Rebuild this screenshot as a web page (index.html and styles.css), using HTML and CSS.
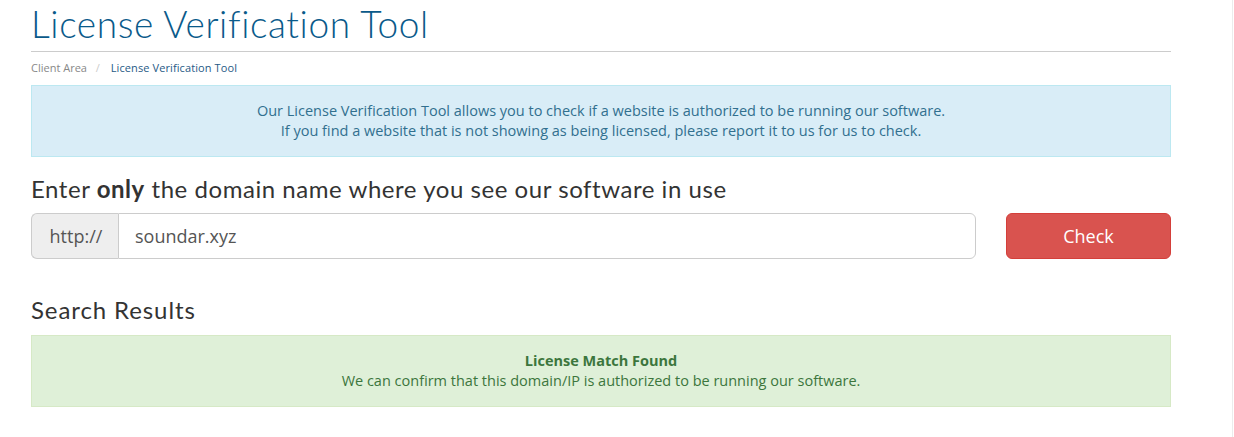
FILE: index.html
```html
<!DOCTYPE html>
<html>
<head>
<meta charset="utf-8">
<link rel="stylesheet" href="styles.css">
</head>
<body>
<div class="page">
  <div class="container">
    <h1 class="title">License Verification Tool</h1>
    <div class="breadcrumb">
      <span class="crumb">Client Area</span>
      <span class="sep">/</span>
      <span class="crumb active">License Verification Tool</span>
    </div>
    <div class="alert alert-info">
      Our License Verification Tool allows you to check if a website is authorized to be running our software.<br>
      If you find a website that is not showing as being licensed, please report it to us for us to check.
    </div>
    <h3 class="subhead">Enter <strong>only</strong> the domain name where you see our software in use</h3>
    <div class="form-row">
      <div class="input-group">
        <span class="addon">http://</span>
        <input class="field" type="text" value="soundar.xyz">
      </div>
      <button class="btn-check" type="button">Check</button>
    </div>
    <h3 class="subhead results">Search Results</h3>
    <div class="alert alert-success">
      <strong>License Match Found</strong><br>
      We can confirm that this domain/IP is authorized to be running our software.
    </div>
  </div>
</div>
</body>
</html>
```

FILE: styles.css
```css
html, body {
  margin: 0;
  padding: 0;
  background: #ffffff;
}
body {
  font-family: "Open Sans", "Liberation Sans", sans-serif;
  font-size: 13px;
  line-height: 20px;
  color: #333;
}
.page {
  width: 1233px;
  height: 437px;
  border-right: 1px solid #ececec;
  box-sizing: border-box;
}
.container {
  width: 1140px;
  margin-left: 31px;
  padding-top: 4px;
}
.title {
  font-family: "Lato", "Liberation Sans", sans-serif;
  font-weight: 300;
  font-size: 37px;
  line-height: 40px;
  color: #0a5a8a;
  margin: 0;
  padding-bottom: 7px;
  border-bottom: 1px solid #cccccc;
  letter-spacing: 0.6px;
}
.breadcrumb {
  font-size: 11px;
  line-height: 16px;
  padding: 8px 0 9px;
  color: #888;
}
.sep {
  color: #ccc;
  margin: 0 8px 0 6px;
}
.crumb.active {
  color: #1f5a86;
  letter-spacing: 0.1px;
}
.alert {
  border: 1px solid transparent;
  padding: 15px;
  text-align: center;
  font-size: 14.5px;
}
.alert-info {
  background: #d9edf7;
  border-color: #bce8f1;
  color: #31708f;
}
.alert-success {
  background: #dff0d8;
  border-color: #d6e9c6;
  color: #3c763d;
}
.subhead {
  font-family: "Lato", "Liberation Sans", sans-serif;
  font-weight: 400;
  font-size: 24px;
  line-height: 28px;
  color: #333;
  margin: 18px 0 10px;
  letter-spacing: 0.55px;
}
.subhead strong {
  font-weight: 700;
}
.subhead.results {
  margin-top: 37px;
  margin-bottom: 11px;
  letter-spacing: 0.9px;
}
.form-row {
  display: grid;
  grid-template-columns: 945px 165px;
  column-gap: 30px;
}
.input-group {
  display: flex;
  height: 46px;
}
.addon {
  display: flex;
  align-items: center;
  justify-content: center;
  width: 84px;
  background: #eeeeee;
  border: 1px solid #cccccc;
  border-right: none;
  border-radius: 6px 0 0 6px;
  font-size: 18px;
  color: #555;
  padding-left: 2px;
}
.field {
  flex: 1;
  min-width: 0;
  height: 46px;
  box-sizing: border-box;
  border: 1px solid #cccccc;
  border-radius: 0 6px 6px 0;
  padding: 0 16px;
  font-family: "Open Sans", "Liberation Sans", sans-serif;
  font-size: 18px;
  color: #555;
  outline: none;
}
.btn-check {
  height: 46px;
  background: #d9534f;
  border: 1px solid #d43f3a;
  border-radius: 6px;
  color: #fff;
  font-family: "Open Sans", "Liberation Sans", sans-serif;
  font-size: 18px;
  padding: 0;
  cursor: pointer;
}
```
